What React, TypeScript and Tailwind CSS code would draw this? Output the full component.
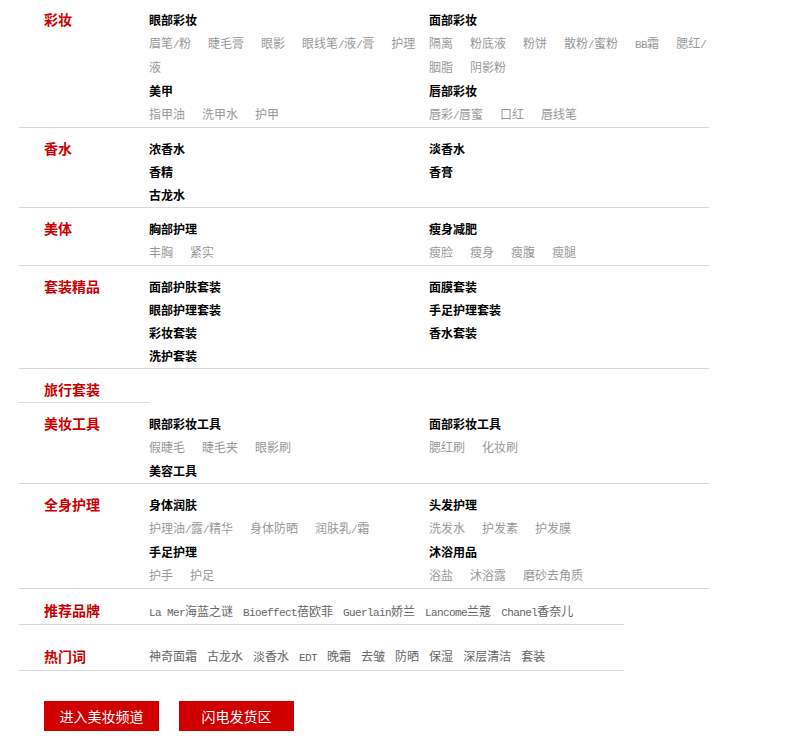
import React from 'react';

type Group = { h: string; items?: string[] };
type Section = { label: string; cols: Group[][]; short?: boolean };

const sections: Section[] = [
  {
    label: '彩妆',
    cols: [
      [
        { h: '眼部彩妆', items: ['眉笔/粉', '睫毛膏', '眼影', '眼线笔/液/膏', '护理液'] },
        { h: '美甲', items: ['指甲油', '洗甲水', '护甲'] },
      ],
      [
        { h: '面部彩妆', items: ['隔离', '粉底液', '粉饼', '散粉/蜜粉', 'BB霜', '腮红/胭脂', '阴影粉'] },
        { h: '唇部彩妆', items: ['唇彩/唇蜜', '口红', '唇线笔'] },
      ],
    ],
  },
  {
    label: '香水',
    cols: [
      [{ h: '浓香水' }, { h: '香精' }, { h: '古龙水' }],
      [{ h: '淡香水' }, { h: '香膏' }],
    ],
  },
  {
    label: '美体',
    cols: [
      [{ h: '胸部护理', items: ['丰胸', '紧实'] }],
      [{ h: '瘦身减肥', items: ['瘦脸', '瘦身', '瘦腹', '瘦腿'] }],
    ],
  },
  {
    label: '套装精品',
    cols: [
      [{ h: '面部护肤套装' }, { h: '眼部护理套装' }, { h: '彩妆套装' }, { h: '洗护套装' }],
      [{ h: '面膜套装' }, { h: '手足护理套装' }, { h: '香水套装' }],
    ],
  },
  { label: '旅行套装', cols: [], short: true },
  {
    label: '美妆工具',
    cols: [
      [{ h: '眼部彩妆工具', items: ['假睫毛', '睫毛夹', '眼影刷'] }, { h: '美容工具' }],
      [{ h: '面部彩妆工具', items: ['腮红刷', '化妆刷'] }],
    ],
  },
  {
    label: '全身护理',
    cols: [
      [
        { h: '身体润肤', items: ['护理油/露/精华', '身体防晒', '润肤乳/霜'] },
        { h: '手足护理', items: ['护手', '护足'] },
      ],
      [
        { h: '头发护理', items: ['洗发水', '护发素', '护发膜'] },
        { h: '沐浴用品', items: ['浴盐', '沐浴露', '磨砂去角质'] },
      ],
    ],
  },
];

const brands = ['La Mer海蓝之谜', 'Bioeffect蓓欧菲', 'Guerlain娇兰', 'Lancome兰蔻', 'Chanel香奈儿'];
const hotWords = ['神奇面霜', '古龙水', '淡香水', 'EDT', '晚霜', '去皱', '防晒', '保湿', '深层清洁', '套装'];

// latin runs use a narrow mono face, like the bitmap font in the shot
const Mix = ({ t }: { t: string }) => (
  <>
    {t
      .split(/([\x00-\x7f]+)/)
      .filter(Boolean)
      .map((p, i) =>
        /^[\x00-\x7f]+$/.test(p) ? (
          <span key={i} className="font-['Liberation_Mono',monospace] text-[11px] leading-none tracking-[-0.6px]">
            {p}
          </span>
        ) : (
          <React.Fragment key={i}>{p}</React.Fragment>
        )
      )}
  </>
);

const Column = ({ groups }: { groups: Group[] }) => (
  <div className="w-[280px]">
    {groups.map((g) => (
      <div key={g.h}>
        <div className="h-[23px] leading-[23px] font-bold text-black">{g.h}</div>
        {g.items && (
          <div className="w-[277.5px] leading-[24px] text-[#999]">
            {g.items.map((it) => (
              <span key={it} className="mr-[17px]">
                <Mix t={it} />
              </span>
            ))}
          </div>
        )}
      </div>
    ))}
  </div>
);

const Label = ({ text }: { text: string }) => (
  <div className="w-[130px] pl-[25px] text-[14px] font-bold text-[#cc0000]">{text}</div>
);

export default function App() {
  return (
    <div className="min-h-screen bg-white text-[12px] font-['Noto_Sans_CJK_SC',sans-serif]">
      <div className="ml-[19px] w-[690px]">
        {sections.map((s, idx) =>
          s.short ? (
            <div key={s.label} className="flex">
              <div className="w-[130px] pl-[25px] pt-[9px] pb-px border-b border-[#d8d8d8] text-[14px] font-bold text-[#cc0000] leading-[23px]">
                {s.label}
              </div>
            </div>
          ) : (
            <div
              key={s.label}
              className={`flex border-b border-[#d8d8d8] pb-px ${idx === 0 ? 'pt-2' : 'pt-[9px]'}`}
            >
              <div className="w-[130px] pl-[25px] text-[14px] font-bold text-[#cc0000] leading-[23px]">
                {s.label}
              </div>
              {s.cols.map((c, i) => (
                <Column key={i} groups={c} />
              ))}
            </div>
          )
        )}

        {/* 推荐品牌 */}
        <div className="flex w-[605px] h-[36px] border-b border-[#d8d8d8] pt-[9px] leading-[25px]">
          <Label text="推荐品牌" />
          <div className="text-[#666] whitespace-nowrap">
            {brands.map((b) => (
              <span key={b} className="mr-[10px]">
                <Mix t={b} />
              </span>
            ))}
          </div>
        </div>

        {/* 热门词 */}
        <div className="flex w-[605px] h-[46px] border-b border-[#d8d8d8] pt-[19px] leading-[24px]">
          <Label text="热门词" />
          <div className="text-[#666] whitespace-nowrap">
            {hotWords.map((w) => (
              <span key={w} className="mr-[10px]">
                <Mix t={w} />
              </span>
            ))}
          </div>
        </div>

        <div className="mt-[30px] ml-[25px] flex gap-[20px]">
          <button className="w-[115px] h-[30px] bg-[#d10000] text-white text-[14px] flex items-center justify-center">
            进入美妆频道
          </button>
          <button className="w-[115px] h-[30px] bg-[#d10000] text-white text-[14px] flex items-center justify-center">
            闪电发货区
          </button>
        </div>
      </div>
    </div>
  );
}
